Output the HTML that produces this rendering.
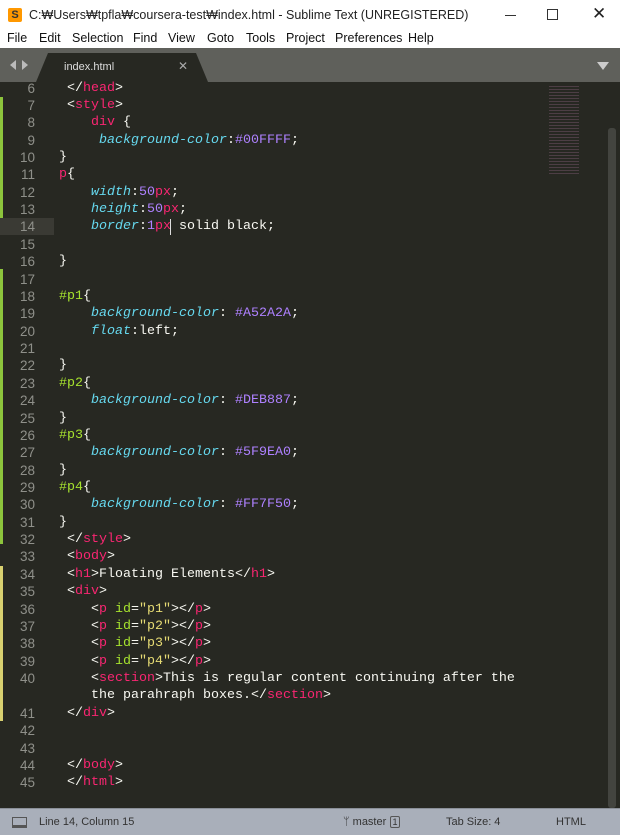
<!DOCTYPE html>
<html><head><meta charset="utf-8"><style>
*{margin:0;padding:0;box-sizing:border-box}
body{width:620px;height:835px;overflow:hidden;background:#272822;font-family:"Liberation Sans",sans-serif;position:relative}
#title{position:absolute;left:0;top:0;width:620px;height:30px;background:#fff;font-size:12.5px;color:#222}
#menu{position:absolute;left:0;top:30px;width:620px;height:18px;background:#fff;font-size:12.5px;color:#111}
#menu span{position:absolute;top:1px}
#tabs{position:absolute;left:0;top:48px;width:620px;height:34px;background:#5f605b}
#ed{position:absolute;left:0;top:82px;width:620px;height:726px;background:#272822}
.l{position:absolute;left:0;height:17.37px;line-height:17.37px;font-family:"Liberation Mono",monospace;font-size:13.33px;color:#f8f8f2;white-space:pre}
.n{position:absolute;width:35px;text-align:right;color:#8f908a;font-family:"Liberation Sans",sans-serif;font-size:13.5px}
.c{position:absolute;left:59px}
.t{color:#f92672}.a{color:#a6e22e}.s{color:#e6db74}.p{color:#66d9ef;font-style:italic}.m{color:#ae81ff}
#status{position:absolute;left:0;top:808px;width:620px;height:27px;background:#a9afba;font-size:11px;color:#333;border-top:1px solid #8a8f98}
#status span{position:absolute;top:7px}
</style></head><body>
<div id="title">
<div style="position:absolute;left:8px;top:8px;width:14px;height:14px;background:#ff9800;border-radius:2px;color:#333;font-size:11px;font-weight:bold;text-align:center;line-height:14px">S</div>
<div style="position:absolute;left:29px;top:8px">C:₩Users₩tpfla₩coursera-test₩index.html - Sublime Text (UNREGISTERED)</div>
<div style="position:absolute;left:505px;top:15px;width:11px;height:1px;background:#333"></div>
<div style="position:absolute;left:547px;top:9px;width:11px;height:11px;border:1px solid #333"></div>
<div style="position:absolute;left:592px;top:4px;font-size:17px">✕</div>
</div>
<div id="menu">
<span style="left:7px">File</span><span style="left:39px">Edit</span><span style="left:72px">Selection</span><span style="left:133px">Find</span><span style="left:168px">View</span><span style="left:207px">Goto</span><span style="left:246px">Tools</span><span style="left:286px">Project</span><span style="left:335px">Preferences</span><span style="left:408px">Help</span>
</div>
<div id="tabs">
<div style="position:absolute;left:10px;top:12px;width:0;height:0;border:5px solid transparent;border-right:6px solid #bbb;border-left:0"></div>
<div style="position:absolute;left:22px;top:12px;width:0;height:0;border:5px solid transparent;border-left:6px solid #bbb;border-right:0"></div>
<svg style="position:absolute;left:36px;top:5px" width="180" height="29"><path d="M0 29 L12 0 H160 L172 29 Z" fill="#272822"/></svg>
<div style="position:absolute;left:64px;top:13px;font-size:11px;color:#ddd">index.html</div>
<div style="position:absolute;left:178px;top:11px;font-size:12px;color:#aaa">✕</div>
<div style="position:absolute;left:597px;top:14px;width:0;height:0;border:6px solid transparent;border-top:8px solid #ccc;border-bottom:0"></div>
</div>
<div id="ed">
<div style="position:absolute;left:0;top:15px;width:3px;height:122px;background:#8cc43c"></div>
<div style="position:absolute;left:0;top:187px;width:3px;height:275px;background:#8cc43c"></div>
<div style="position:absolute;left:0;top:484px;width:3px;height:155px;background:#d8d070"></div>
<div style="position:absolute;left:0;top:136px;width:54px;height:17px;background:#3a3a34"></div>
<div style="position:absolute;left:549px;top:2px;width:30px;height:90px;opacity:.45;background:repeating-linear-gradient(#272822 0 2px,#7b5a70 2px 3px)"></div>
<div style="position:absolute;left:608px;top:46px;width:8px;height:680px;background:#3a3b36;border-radius:3px"></div>
<div style="position:absolute;left:608px;top:46px;width:8px;height:680px;background:#4a4b46;border-radius:3px;opacity:.6"></div>
</div>
<div id="code"></div>
<script>
const L=[
[6,' &lt;/<span class=t>head</span>&gt;'],
[7,' &lt;<span class=t>style</span>&gt;'],
[8,'    <span class=t>div</span> {'],
[9,'     <span class=p>background-color</span>:<span class=m>#00FFFF</span>;'],
[10,'}'],
[11,'<span class=t>p</span>{'],
[12,'    <span class=p>width</span>:<span class=m>50</span><span class=t>px</span>;'],
[13,'    <span class=p>height</span>:<span class=m>50</span><span class=t>px</span>;'],
[14,'    <span class=p>border</span>:<span class=m>1</span><span class=t>px</span> solid black;'],
[15,''],[16,'}'],[17,''],
[18,'<span class=a>#p1</span>{'],
[19,'    <span class=p>background-color</span>: <span class=m>#A52A2A</span>;'],
[20,'    <span class=p>float</span>:left;'],
[21,''],[22,'}'],
[23,'<span class=a>#p2</span>{'],
[24,'    <span class=p>background-color</span>: <span class=m>#DEB887</span>;'],
[25,'}'],
[26,'<span class=a>#p3</span>{'],
[27,'    <span class=p>background-color</span>: <span class=m>#5F9EA0</span>;'],
[28,'}'],
[29,'<span class=a>#p4</span>{'],
[30,'    <span class=p>background-color</span>: <span class=m>#FF7F50</span>;'],
[31,'}'],
[32,' &lt;/<span class=t>style</span>&gt;'],
[33,' &lt;<span class=t>body</span>&gt;'],
[34,' &lt;<span class=t>h1</span>&gt;Floating Elements&lt;/<span class=t>h1</span>&gt;'],
[35,' &lt;<span class=t>div</span>&gt;'],
[36,'    &lt;<span class=t>p</span> <span class=a>id</span>=<span class=s>"p1"</span>&gt;&lt;/<span class=t>p</span>&gt;'],
[37,'    &lt;<span class=t>p</span> <span class=a>id</span>=<span class=s>"p2"</span>&gt;&lt;/<span class=t>p</span>&gt;'],
[38,'    &lt;<span class=t>p</span> <span class=a>id</span>=<span class=s>"p3"</span>&gt;&lt;/<span class=t>p</span>&gt;'],
[39,'    &lt;<span class=t>p</span> <span class=a>id</span>=<span class=s>"p4"</span>&gt;&lt;/<span class=t>p</span>&gt;'],
[40,'    &lt;<span class=t>section</span>&gt;This is regular content continuing after the'],
['','    the parahraph boxes.&lt;/<span class=t>section</span>&gt;'],
[41,' &lt;/<span class=t>div</span>&gt;'],
[42,''],[43,''],
[44,' &lt;/<span class=t>body</span>&gt;'],
[45,' &lt;/<span class=t>html</span>&gt;']];
let h='';L.forEach((x,i)=>{h+='<div class=l style="top:'+(79.5+i*17.37).toFixed(2)+'px;width:600px"><span class=n>'+x[0]+'</span><span class=c>'+x[1]+'</span></div>'});
document.getElementById('code').innerHTML=h;
</script>
<div style="position:absolute;left:170px;top:219px;width:1px;height:16px;background:#ddd"></div>
<div id="status">
<div style="position:absolute;left:12px;top:8px;width:15px;height:11px;border:1px solid #555;border-bottom:3px solid #555"></div>
<span style="left:39px">Line 14, Column 15</span>
<span style="left:343px">ᛘ master</span>
<div style="position:absolute;left:390px;top:7px;width:10px;height:12px;border:1px solid #555;border-radius:2px;font-size:9px;text-align:center;line-height:10px;color:#333">1</div>
<span style="left:446px">Tab Size: 4</span>
<span style="left:556px">HTML</span>
</div>
</body></html>
